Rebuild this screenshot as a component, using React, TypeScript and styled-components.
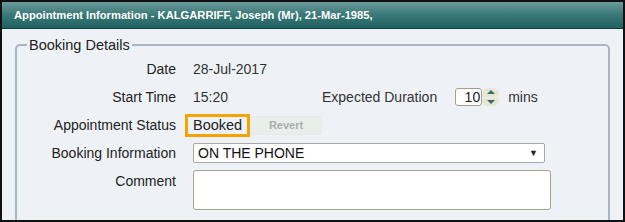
import React from "react";
import styled, { createGlobalStyle } from "styled-components";

const GlobalStyle = createGlobalStyle`
  html, body {
    margin: 0;
    padding: 0;
    background: #000;
  }
  * {
    box-sizing: border-box;
  }
`;

const Frame = styled.div`
  width: 625px;
  height: 222px;
  border: 2px solid #111;
  background: #eef2f6;
  overflow: hidden;
  font-family: "Liberation Sans", Arial, sans-serif;
  color: #1e1e1e;
`;

const Header = styled.div`
  height: 27px;
  display: flex;
  align-items: center;
  padding-left: 12px;
  background: linear-gradient(to bottom, #6b9c9b 0%, #3d7a79 45%, #1f6261 100%);
  border-bottom: 1px solid #0f3f3e;
  color: #fff;
  font-family: "Liberation Sans", Arial, sans-serif;
  font-weight: bold;
  font-size: 11.2px;
`;

const Body = styled.div`
  padding: 8px 13px 0 13px;
`;

const Group = styled.fieldset`
  margin: 0;
  padding: 2px 0 0 0;
  border: 2px solid #a6b7c3;
  border-radius: 5px;
  height: 220px;
`;

const Legend = styled.legend`
  margin-left: 10px;
  padding: 0 2px;
  font-size: 14.5px;
  color: #222;
`;

const Rows = styled.div`
  display: flex;
  flex-direction: column;
`;

const Row = styled.div<{ $top?: boolean; $h?: number; $mt?: number }>`
  display: grid;
  grid-template-columns: 159px auto;
  column-gap: 17px;
  align-items: ${(p) => (p.$top ? "start" : "center")};
  height: ${(p) => p.$h ?? 28}px;
  margin-top: ${(p) => p.$mt ?? 0}px;
`;

const Label = styled.div<{ $pad?: number }>`
  text-align: right;
  font-size: 14px;
  color: #222;
  padding-top: ${(p) => p.$pad ?? 0}px;
  white-space: nowrap;
`;

const Value = styled.div`
  display: flex;
  align-items: center;
  font-size: 14px;
  color: #333;
`;

const TimeCell = styled.span`
  width: 129px;
`;

const DurationLabel = styled.span`
  margin-right: 18px;
`;

const NumberBox = styled.div`
  width: 27px;
  height: 18px;
  border: 1px solid #a49f86;
  border-radius: 3px;
  background: #fff;
  text-align: right;
  padding-right: 1px;
  line-height: 16px;
  font-size: 14px;
  color: #222;
`;

const Spinner = styled.div`
  width: 17px;
  height: 18px;
  display: flex;
  flex-direction: column;
  gap: 1px;
  margin-right: 9px;
`;

const SpinHalf = styled.div<{ $up?: boolean }>`
  flex: 1;
  display: flex;
  align-items: center;
  justify-content: center;
  background: #e9e6d0;
  border-radius: ${(p) => (p.$up ? "8px 8px 3px 3px" : "3px 3px 8px 8px")};
`;

const Mins = styled.span``;

const StatusBox = styled.div`
  border: 3px solid #f5a300;
  padding: 1px 5px 1px 5px;
  margin-left: -8px;
  width: 65px;
  height: 23px;
  display: flex;
  align-items: center;
  font-size: 14.5px;
  color: #222;
  background: #eef2f6;
`;

const RevertButton = styled.button`
  width: 72px;
  height: 19px;
  border: 1px solid #e6ebe8;
  border-radius: 4px;
  background: #e8eeea;
  color: #a9aeb0;
  font-family: "Liberation Sans", Arial, sans-serif;
  font-weight: bold;
  font-size: 11px;
  padding: 0;
`;

const SelectBox = styled.div`
  width: 352px;
  height: 20px;
  border: 1px solid #a7a7a7;
  border-radius: 2px;
  background: #fff;
  display: flex;
  align-items: center;
  justify-content: space-between;
  padding: 0 6px 0 4px;
  font-size: 14px;
  color: #111;
`;

const Caret = styled.span`
  font-size: 9px;
  color: #222;
`;

const CommentBox = styled.div`
  width: 358px;
  height: 40px;
  border: 1px solid #a8a48a;
  border-radius: 3px;
  background: #fff;
`;

function Arrow({ up }: { up?: boolean }) {
  return (
    <svg width="8" height="4" viewBox="0 0 8 4">
      <path d={up ? "M0 4 L4 0 L8 4 Z" : "M0 0 L4 4 L8 0 Z"} fill="#2b6e6c" />
    </svg>
  );
}

export default function App() {
  return (
    <Frame>
      <GlobalStyle />
      <Header>
        Appointment Information - KALGARRIFF, Joseph (Mr), 21-Mar-1985,
      </Header>
      <Body>
        <Group>
          <Legend>Booking Details</Legend>
          <Rows>
            <Row>
              <Label>Date</Label>
              <Value>28-Jul-2017</Value>
            </Row>
            <Row>
              <Label>Start Time</Label>
              <Value>
                <TimeCell>15:20</TimeCell>
                <DurationLabel>Expected Duration</DurationLabel>
                <NumberBox>10</NumberBox>
                <Spinner>
                  <SpinHalf $up>
                    <Arrow up />
                  </SpinHalf>
                  <SpinHalf>
                    <Arrow />
                  </SpinHalf>
                </Spinner>
                <Mins>mins</Mins>
              </Value>
            </Row>
            <Row>
              <Label>Appointment Status</Label>
              <Value>
                <StatusBox>Booked</StatusBox>
                <RevertButton>Revert</RevertButton>
              </Value>
            </Row>
            <Row>
              <Label>Booking Information</Label>
              <Value>
                <SelectBox>
                  ON THE PHONE
                  <Caret>▼</Caret>
                </SelectBox>
              </Value>
            </Row>
            <Row $top $h={46} $mt={3}>
              <Label $pad={3}>Comment</Label>
              <Value>
                <CommentBox />
              </Value>
            </Row>
          </Rows>
        </Group>
      </Body>
    </Frame>
  );
}
